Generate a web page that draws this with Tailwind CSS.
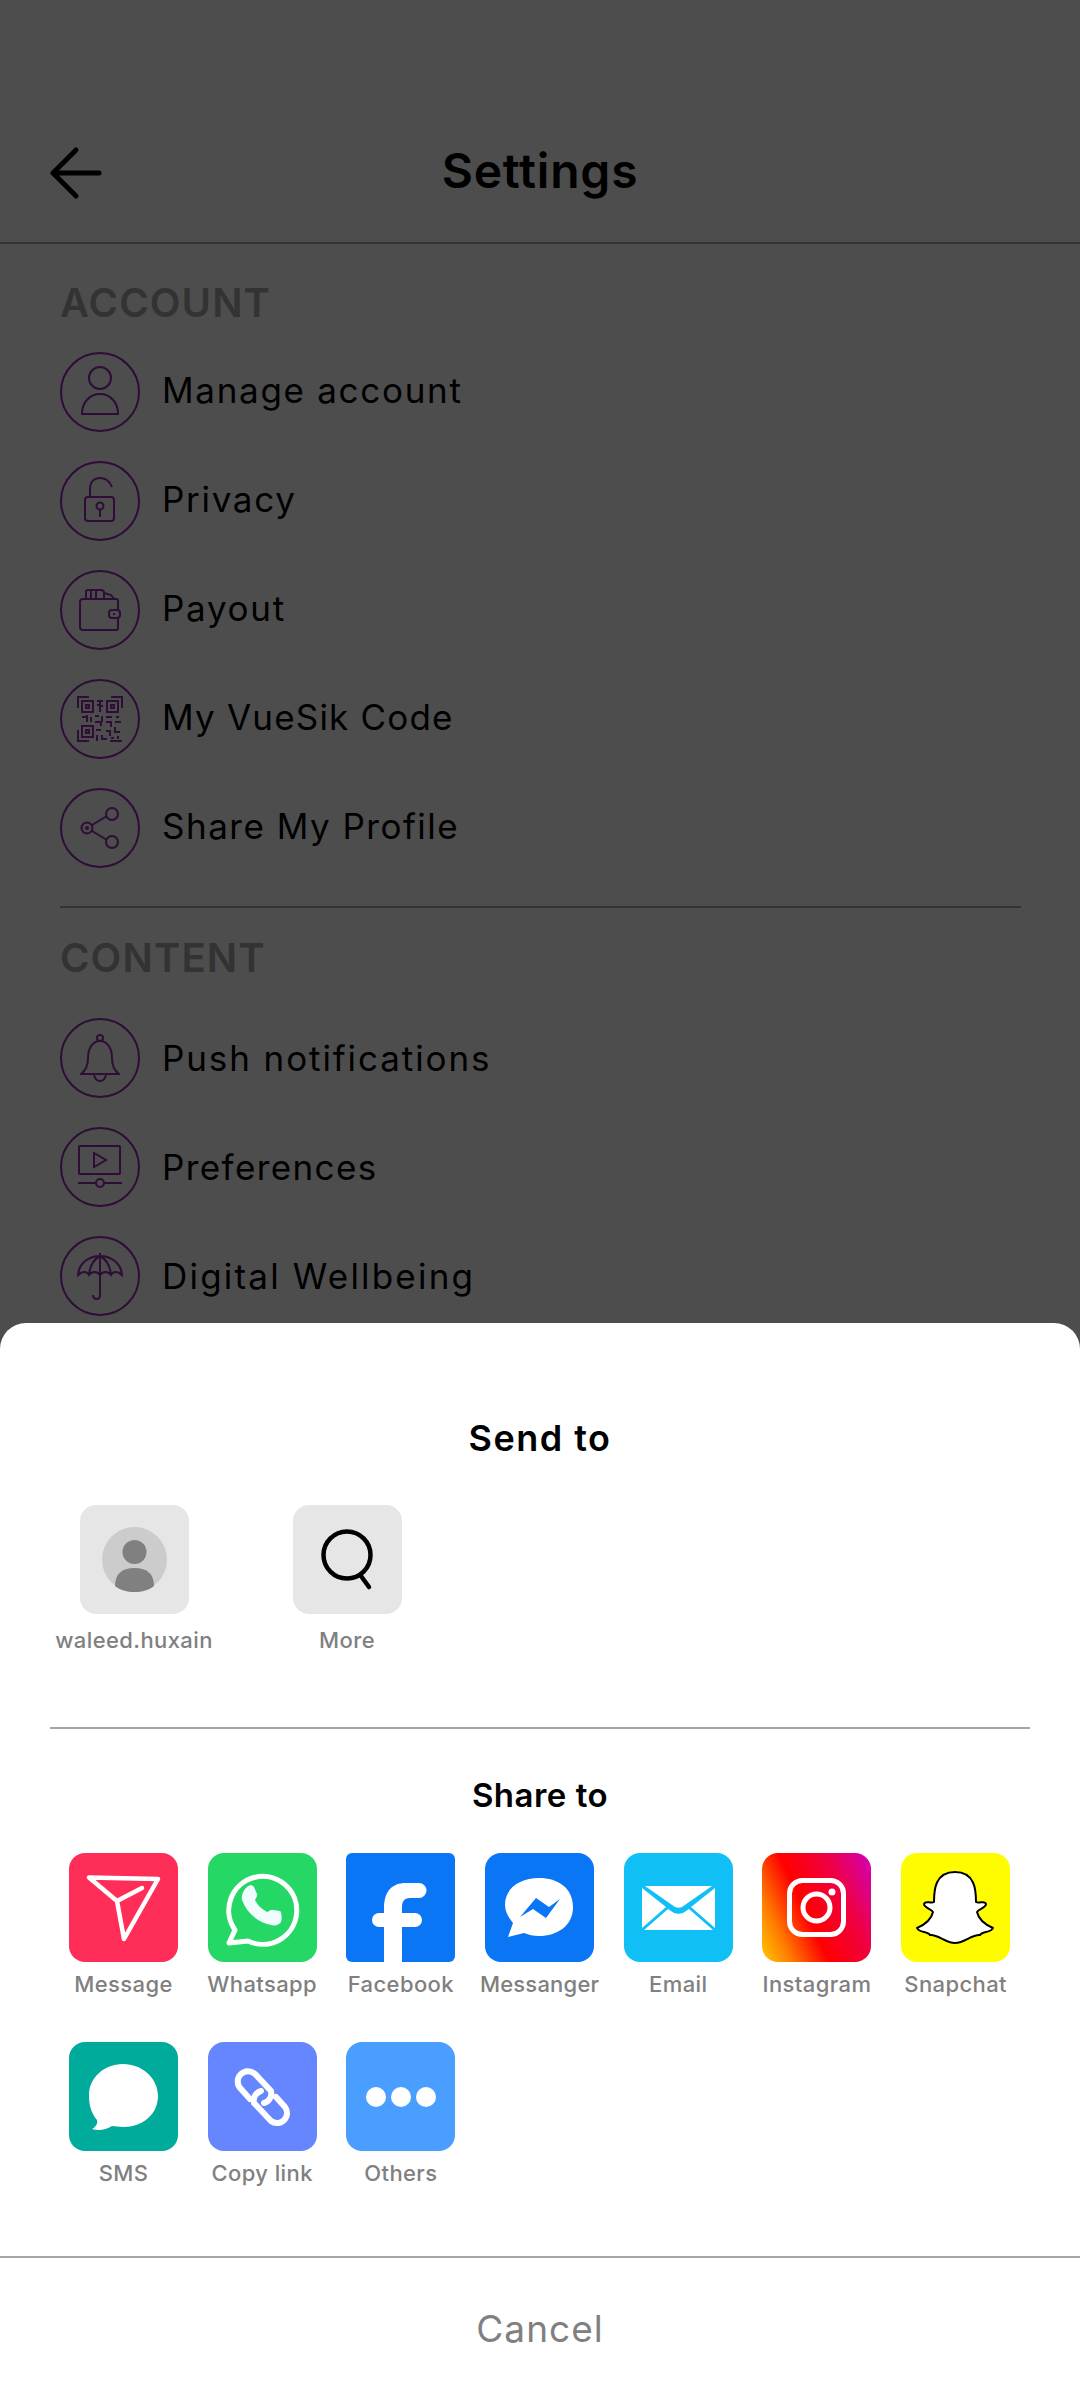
<!DOCTYPE html>
<html lang="en">
<head>
    <meta charset="UTF-8">
    <meta name="viewport" content="width=device-width, initial-scale=1.0">
    <title>Settings</title>
    <script src="https://cdn.jsdelivr.net/npm/@tailwindcss/browser@4"></script>
</head>
<body class="bg-[#4d4d4d] font-['Inter',sans-serif]">
<div class="relative w-[1080px] h-[2401px] overflow-hidden">

    <!-- Header -->
    <header class="relative h-[244px] border-b-2 border-[#333333] flex items-end justify-center pb-[41px]">
        <svg class="absolute left-[49px] top-[146px] w-[54px] h-[54px]" viewBox="0 0 54 54" fill="none" stroke="#000" stroke-width="5" stroke-linecap="round" stroke-linejoin="round">
            <path d="M50 27H4M27 4 4 27l23 23"/>
        </svg>
        <h1 class="text-[48px] leading-[60px] font-semibold text-black tracking-[0.8px]">Settings</h1>
    </header>

    <!-- Settings list -->
    <main class="px-[60px]">
        <h2 class="pt-[31px] text-[40px] leading-[56px] font-semibold text-[#333333] tracking-[1.1px]">ACCOUNT</h2>
        <ul class="mt-[22px] flex flex-col gap-[31px]">
            <li class="flex items-center gap-[22px] h-[78px]">
                <span class="w-[80px] h-[80px] rounded-full border-2 border-[#2e0d36] flex items-center justify-center shrink-0">
                    <svg class="w-[48px] h-[56px]" viewBox="0 0 48 56" fill="none" stroke="#2e0d36" stroke-width="2"><circle cx="24" cy="14" r="11"/><path d="M6 50c0-12 8-20 18-20s18 8 18 20z"/></svg>
                </span>
                <span class="mb-[4px] text-[35px] leading-[48px] text-black tracking-[1.7px]">Manage account</span>
            </li>
            <li class="flex items-center gap-[22px] h-[78px]">
                <span class="w-[80px] h-[80px] rounded-full border-2 border-[#2e0d36] flex items-center justify-center shrink-0">
                    <svg class="w-[40px] h-[50px]" viewBox="0 0 40 50" fill="none" stroke="#2e0d36" stroke-width="2"><path d="M10 21V13C10 6 14 2 20 2s10 4 12 9"/><rect x="5" y="21" width="29" height="24" rx="3"/><circle cx="20" cy="30" r="3.5"/><path d="M20 34v7"/></svg>
                </span>
                <span class="mb-[4px] text-[35px] leading-[48px] text-black tracking-[1.7px]">Privacy</span>
            </li>
            <li class="flex items-center gap-[22px] h-[78px]">
                <span class="w-[80px] h-[80px] rounded-full border-2 border-[#2e0d36] flex items-center justify-center shrink-0">
                    <svg class="w-[48px] h-[50px]" viewBox="0 0 48 50" fill="none" stroke="#2e0d36" stroke-width="2"><path d="M7 14h33a2 2 0 0 1 2 2v9M42 33v10a2 2 0 0 1-2 2H7a3 3 0 0 1-3-3V17a3 3 0 0 1 3-3"/><rect x="33" y="25" width="11" height="8" rx="3"/><path d="M37 29h2M10 14V7a2 2 0 0 1 2-2h13a3 3 0 0 1 3 3v6M15 5v9M20 5v9M28 8l7 2 3 4"/></svg>
                </span>
                <span class="mb-[4px] text-[35px] leading-[48px] text-black tracking-[1.7px]">Payout</span>
            </li>
            <li class="flex items-center gap-[22px] h-[78px]">
                <span class="w-[80px] h-[80px] rounded-full border-2 border-[#2e0d36] flex items-center justify-center shrink-0">
                    <svg class="w-[46px] h-[46px]" viewBox="0 0 46 46" fill="none" stroke="#2e0d36" stroke-width="2"><path d="M12 1H1v11M34 1h11v11M12 45H1V34"/><rect x="5" y="5" width="11" height="11"/><rect x="9" y="9" width="3" height="3"/><rect x="30" y="5" width="11" height="11"/><rect x="34" y="9" width="3" height="3"/><rect x="5" y="30" width="11" height="11"/><rect x="9" y="34" width="3" height="3"/><path d="M20 5h6M23 5v4h-3M26 10h-3v6M5 21h5M10 19v7M14 21v5M18 20h4M25 20v6M29 21h6M39 21h3M18 26h6v4M29 26h5v5M38 26h6M19 34h5M29 35h4v5M38 31v5h5M20 39v6M25 39v4h5M34 42h3M41 40v3M33 45h12"/></svg>
                </span>
                <span class="mb-[4px] text-[35px] leading-[48px] text-black tracking-[1.2px]">My VueSik Code</span>
            </li>
            <li class="flex items-center gap-[22px] h-[78px]">
                <span class="w-[80px] h-[80px] rounded-full border-2 border-[#2e0d36] flex items-center justify-center shrink-0">
                    <svg class="w-[40px] h-[44px]" viewBox="0 0 40 44" fill="none" stroke="#2e0d36" stroke-width="2"><circle cx="7" cy="22" r="5.5"/><circle cx="7" cy="22" r="1" fill="#2e0d36"/><circle cx="32" cy="8" r="6"/><circle cx="32" cy="36" r="6"/><path d="m12 19 15-9M12 25l15 9"/></svg>
                </span>
                <span class="mb-[4px] text-[35px] leading-[48px] text-black tracking-[1.5px]">Share My Profile</span>
            </li>
        </ul>
        <hr class="mt-[39px] w-[961px] border-0 border-t-2 border-[#333333]">
        <h2 class="mt-[22px] text-[40px] leading-[56px] font-semibold text-[#333333] tracking-[1.1px]">CONTENT</h2>
        <ul class="mt-[33px] flex flex-col gap-[31px]">
            <li class="flex items-center gap-[22px] h-[78px]">
                <span class="w-[80px] h-[80px] rounded-full border-2 border-[#2e0d36] flex items-center justify-center shrink-0">
                    <svg class="w-[40px] h-[48px]" viewBox="0 0 40 48" fill="none" stroke="#2e0d36" stroke-width="2"><circle cx="20" cy="4" r="3"/><path d="M1 40c4-3 7-7 7-16 0-10 5-17 12-17s12 7 12 17c0 9 3 13 7 16zM14 41c1 4 3 6 6 6s5-2 6-6"/></svg>
                </span>
                <span class="text-[35px] leading-[48px] text-black tracking-[1.9px]">Push notifications</span>
            </li>
            <li class="flex items-center gap-[22px] h-[78px]">
                <span class="w-[80px] h-[80px] rounded-full border-2 border-[#2e0d36] flex items-center justify-center shrink-0">
                    <svg class="w-[44px] h-[44px]" viewBox="0 0 44 44" fill="none" stroke="#2e0d36" stroke-width="2"><rect x="1" y="1" width="41" height="28" rx="1"/><path d="m16 8 12 7-12 7z"/><path d="M0 38h18M26 38h18"/><circle cx="22" cy="38" r="4"/></svg>
                </span>
                <span class="text-[35px] leading-[48px] text-black tracking-[1.4px]">Preferences</span>
            </li>
            <li class="flex items-center gap-[22px] h-[78px]">
                <span class="w-[80px] h-[80px] rounded-full border-2 border-[#2e0d36] flex items-center justify-center shrink-0">
                    <svg class="w-[46px] h-[48px]" viewBox="0 0 46 48" fill="none" stroke="#2e0d36" stroke-width="2"><path d="M1 23C2 11 12 4 23 4s21 7 22 19c-4-4-9-4-11 0-3-4-8-4-11 0-3-4-8-4-11 0-2-4-7-4-11 0zM23 1v42c0 2-1 4-3 4-3 0-4-2-4-4M12 23C13 13 17 7 23 4c6 3 10 9 11 19"/></svg>
                </span>
                <span class="text-[35px] leading-[48px] text-black tracking-[2.2px]">Digital Wellbeing</span>
            </li>
        </ul>
    </main>

    <!-- Share sheet -->
    <section class="absolute inset-x-0 bottom-0 h-[1078px] bg-white rounded-t-[26px] flex flex-col">
        <h3 class="pt-[91px] text-center text-[36px] leading-[48px] font-semibold text-black tracking-[1.5px]">Send to</h3>

        <div class="mt-[43px] pl-[64px] flex gap-[73px]">
            <div class="w-[140px] flex flex-col items-center">
                <span class="w-[109px] h-[109px] rounded-[16px] bg-[#e6e6e6] flex items-center justify-center">
                    <svg class="w-[65px] h-[65px]" viewBox="0 0 65 65"><circle cx="32.5" cy="32.5" r="32.5" fill="#cccccc"/><circle cx="32.5" cy="25" r="12" fill="#808080"/><path d="M13 59c0-13 8-18 19.500-18S52 46 52 59c-5 4-12 6-19.500 6S18 63 13 59z" fill="#808080"/></svg>
                </span>
                <span class="mt-[12px] text-[22px] leading-[28px] font-medium text-[#808080] whitespace-nowrap tracking-[0.4px]">waleed.huxain</span>
            </div>
            <div class="w-[140px] flex flex-col items-center">
                <span class="w-[109px] h-[109px] rounded-[16px] bg-[#e6e6e6] flex items-center justify-center">
                    <svg class="w-[54px] h-[64px]" viewBox="0 0 54 64" fill="none" stroke="#000" stroke-width="4.500" stroke-linecap="round"><circle cx="27" cy="27" r="23.500"/><path d="m41 48 8 11"/></svg>
                </span>
                <span class="mt-[12px] text-[22px] leading-[28px] font-medium text-[#808080] tracking-[0.4px]">More</span>
            </div>
        </div>

        <hr class="mt-[73px] mx-[50px] border-0 border-t-2 border-[#a6a6a6]">
        <h3 class="mt-[44px] text-center text-[33px] leading-[44px] font-semibold text-black tracking-[0.5px]">Share to</h3>

        <div class="mt-[36px] pl-[69px] grid grid-cols-[repeat(7,109px)] gap-x-[29.700px] gap-y-[44px]">
            <div class="flex flex-col items-center">
                <span class="w-[109px] h-[109px] rounded-[16px] bg-[#ff2e58] flex items-center justify-center">
                    <svg class="w-[109px] h-[109px]" viewBox="0 0 109 109" fill="none" stroke="#fff" stroke-width="4.500" stroke-linecap="round" stroke-linejoin="round"><path d="M20 24.500 89 26 55 86 48 48zM48 48l25-13"/></svg>
                </span>
                <span class="mt-[8px] text-[22px] leading-[28px] font-medium text-[#808080] whitespace-nowrap tracking-[0.4px]">Message</span>
            </div>
            <div class="flex flex-col items-center">
                <span class="w-[109px] h-[109px] rounded-[16px] bg-[#25d866] flex items-center justify-center">
                    <svg class="w-[109px] h-[109px]" viewBox="0 0 109 109"><path d="M21 90l6-13a34 34 0 1 1 13 11z" fill="none" stroke="#fff" stroke-width="5" stroke-linejoin="round"/><path d="M38 35c2-3 6-4 8-1l3 7c1 2-2 5-2 6 3 6 7 9 12 12 2 0 4-3 6-2l7 1c2 1 2 9 1 11-2 3-6 4-10 3-14-3-24-12-29-25-1-4 1-9 4-12z" fill="#f0fdff"/></svg>
                </span>
                <span class="mt-[8px] text-[22px] leading-[28px] font-medium text-[#808080] whitespace-nowrap tracking-[0.4px]">Whatsapp</span>
            </div>
            <div class="flex flex-col items-center">
                <span class="w-[109px] h-[109px] rounded-[6px] bg-[#0a76f6] flex items-center justify-center">
                    <svg class="w-[109px] h-[109px]" viewBox="0 0 109 109"><path d="M38 109V74h-5a7 7 0 0 1 0-14h5v-4C38 38 46 30 60 30h13a7.500 7.500 0 0 1 0 15h-9c-5 0-8 3-8 9v6h13a7 7 0 0 1 0 14H56v35z" fill="#fff"/></svg>
                </span>
                <span class="mt-[8px] text-[22px] leading-[28px] font-medium text-[#808080] whitespace-nowrap tracking-[0.4px]">Facebook</span>
            </div>
            <div class="flex flex-col items-center">
                <span class="w-[109px] h-[109px] rounded-[16px] bg-[#0a76f6] flex items-center justify-center">
                    <svg class="w-[109px] h-[109px]" viewBox="0 0 109 109"><path d="M23 84l5-14C23 64 20 58 20 52c0-17 15-27 34-27s34 10 34 29-16 29-34 29c-6 0-10-1-15-3z" fill="#fff"/><path d="M35 64l16-19 13 9 11-8-14 19-13-9z" fill="#0a76f6"/></svg>
                </span>
                <span class="mt-[8px] text-[22px] leading-[28px] font-medium text-[#808080] whitespace-nowrap tracking-[0.2px]">Messanger</span>
            </div>
            <div class="flex flex-col items-center">
                <span class="w-[109px] h-[109px] rounded-[16px] bg-[#10bff5] flex items-center justify-center">
                    <svg class="w-[109px] h-[109px]" viewBox="0 0 109 109"><path d="M21 33h67L58 54c-2 1-5 1-7 0z" fill="#fff"/><path d="M18 35v40l24-21zM91 35v40L67 54zM44 56l6 4c3 1 6 1 9 0l6-4 24 21H20z" fill="#fff"/></svg>
                </span>
                <span class="mt-[8px] text-[22px] leading-[28px] font-medium text-[#808080] whitespace-nowrap tracking-[0.4px]">Email</span>
            </div>
            <div class="flex flex-col items-center">
                <span class="w-[109px] h-[109px] rounded-[16px] bg-[linear-gradient(65deg,#ffc800_0%,#ff8000_18%,#ff0000_42%,#f00040_70%,#d000b8_100%)] flex items-center justify-center">
                    <svg class="w-[109px] h-[109px]" viewBox="0 0 109 109" fill="none" stroke="#fff" stroke-width="5"><rect x="27.500" y="27.500" width="54" height="54" rx="13"/><circle cx="54.500" cy="54.500" r="13.500"/><circle cx="70" cy="39" r="3.500" fill="#fff" stroke="none"/></svg>
                </span>
                <span class="mt-[8px] text-[22px] leading-[28px] font-medium text-[#808080] whitespace-nowrap tracking-[0.4px]">Instagram</span>
            </div>
            <div class="flex flex-col items-center">
                <span class="w-[109px] h-[109px] rounded-[16px] bg-[#fffc00] flex items-center justify-center">
                    <svg class="w-[109px] h-[109px]" viewBox="0 0 109 109"><path d="M54 19c-20 0-21 18-21 30-3 2-9-2-10 2 0 4 8 5 9 8-2 9-9 13-16 16 2 5 11 3 13 7 8-1 15 8 25 8s17-9 25-8c2-4 11-2 13-7-7-3-14-7-16-16 1-3 9-4 9-8-1-4-7 0-10-2 0-12-1-30-21-30z" fill="#fff" stroke="#000" stroke-width="2" stroke-linejoin="round"/></svg>
                </span>
                <span class="mt-[8px] text-[22px] leading-[28px] font-medium text-[#808080] whitespace-nowrap tracking-[0.4px]">Snapchat</span>
            </div>
            <div class="flex flex-col items-center">
                <span class="w-[109px] h-[109px] rounded-[16px] bg-[#00ab9c] flex items-center justify-center">
                    <svg class="w-[109px] h-[109px]" viewBox="0 0 109 109"><path d="M23 87c4-2 6-6 5-9-5-6-8-13-8-25 0-17 15-31 34-31s35 14 35 32-15 31-35 31c-4 0-8-1-11-1-6 4-14 5-20 3z" fill="#fff"/></svg>
                </span>
                <span class="mt-[8px] text-[22px] leading-[28px] font-medium text-[#808080] whitespace-nowrap tracking-[0.4px]">SMS</span>
            </div>
            <div class="flex flex-col items-center">
                <span class="w-[109px] h-[109px] rounded-[16px] bg-[#6686ff] flex items-center justify-center">
                    <svg class="w-[109px] h-[109px]" viewBox="0 0 109 109" fill="none" stroke="#fff" stroke-width="6" stroke-linecap="round"><path d="M42 57 33 47a10 10 0 0 1 14-15l16 17a10 10 0 0 1-7 12"/><path d="M53 49a10 10 0 0 0-7 12l17 18a10 10 0 0 0 14-14L68 55"/></svg>
                </span>
                <span class="mt-[8px] text-[22px] leading-[28px] font-medium text-[#808080] whitespace-nowrap tracking-[0.4px]">Copy link</span>
            </div>
            <div class="flex flex-col items-center">
                <span class="w-[109px] h-[109px] rounded-[16px] bg-[#4a9eff] flex items-center justify-center gap-[5px]">
                    <span class="w-[20px] h-[20px] rounded-full bg-white"></span>
                    <span class="w-[20px] h-[20px] rounded-full bg-white"></span>
                    <span class="w-[20px] h-[20px] rounded-full bg-white"></span>
                </span>
                <span class="mt-[8px] text-[22px] leading-[28px] font-medium text-[#808080] whitespace-nowrap tracking-[0.4px]">Others</span>
            </div>
        </div>

        <button class="mt-auto h-[145px] pb-[2px] border-t-2 border-[#a6a6a6] text-[37px] text-[#808080] tracking-[1px]">Cancel</button>
    </section>
</div>
</body>
</html>
